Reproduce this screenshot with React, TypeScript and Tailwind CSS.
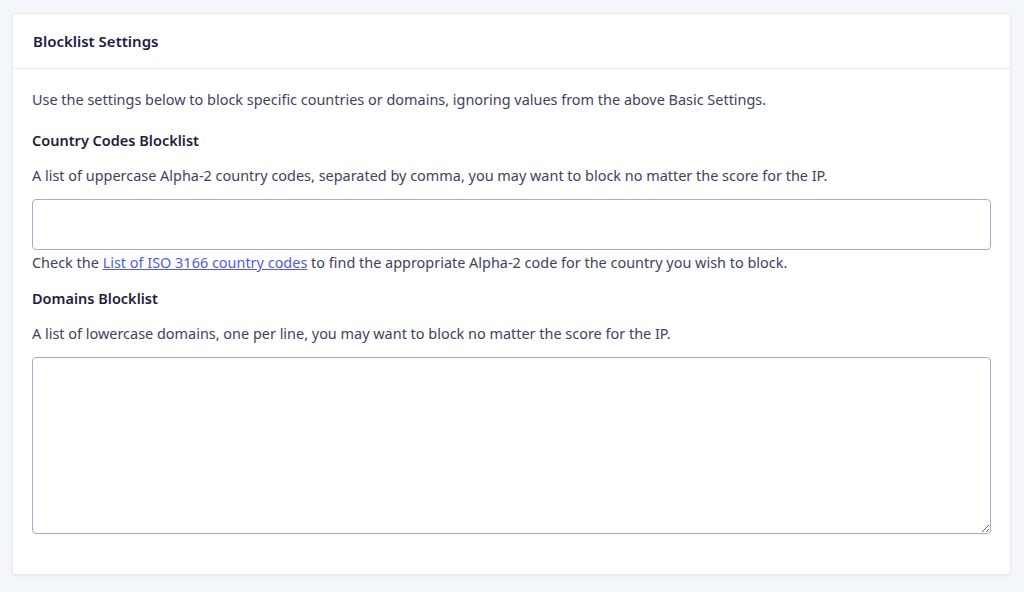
import React, { useState } from "react";

const Field: React.FC<{ title: string; help: string; children: React.ReactNode }> = ({
  title,
  help,
  children,
}) => {
  return (
    <div className="flex flex-col">
      <h3 className="text-[14.5px] font-semibold text-[#1f1d3a] leading-[20px]">{title}</h3>
      <p className="mt-[16px] leading-[20px]">{help}</p>
      {children}
    </div>
  );
};

export default function App() {
  const [codes, setCodes] = useState("");
  const [domains, setDomains] = useState("");

  return (
    <div
      className="min-h-[592px] bg-[#f3f6fa] px-[12px] pt-[13px] pb-[16px]"
      style={{ fontFamily: '"Noto Sans", "Open Sans", sans-serif' }}
    >
      <div className="w-[999px] bg-white rounded-[3px] border border-[#e6e9f0] shadow-[0_1px_2px_rgba(30,40,90,0.06)]">
        <div className="h-[55px] flex items-center px-[20px] border-b border-[#e6e9f0]">
          <h2 className="text-[15px] font-semibold text-[#1e1b45]">Blocklist Settings</h2>
        </div>
        <div className="px-[19px] pt-[21px] pb-[40px] text-[14.45px] text-[#40425c] flex flex-col">
          <p className="leading-[20px]">
            Use the settings below to block specific countries or domains, ignoring values from the above Basic
            Settings.
          </p>
          <div className="mt-[20px]">
            <Field
              title="Country Codes Blocklist"
              help="A list of uppercase Alpha-2 country codes, separated by comma, you may want to block no matter the score for the IP."
            >
              <input
                type="text"
                value={codes}
                onChange={(e) => setCodes(e.target.value)}
                className="mt-[13px] h-[51px] w-full rounded-[4px] border border-[#a9a8d0] px-3 outline-none"
              />
              <p className="leading-[20px] mt-[3px]">
                Check the{" "}
                <a href="#" className="text-[#4e5be8] underline">
                  List of ISO 3166 country codes
                </a>{" "}
                to find the appropriate Alpha-2 code for the country you wish to block.
              </p>
            </Field>
          </div>
          <div className="mt-[15px]">
            <Field
              title="Domains Blocklist"
              help="A list of lowercase domains, one per line, you may want to block no matter the score for the IP."
            >
              <textarea
                value={domains}
                onChange={(e) => setDomains(e.target.value)}
                className="mt-[13px] h-[177px] w-full rounded-[4px] border border-[#a9a8d0] px-3 py-2 outline-none"
              />
            </Field>
          </div>
        </div>
      </div>
    </div>
  );
}
